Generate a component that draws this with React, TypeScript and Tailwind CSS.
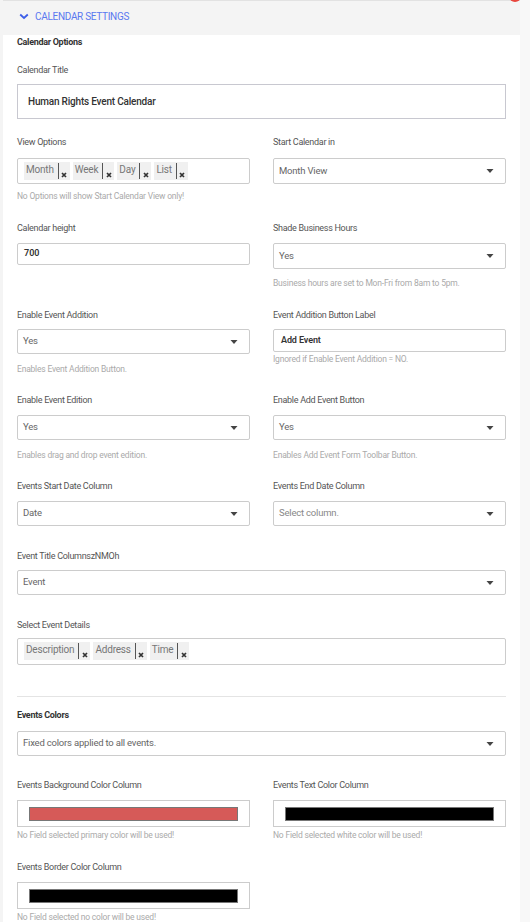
import React from "react";

const font = { fontFamily: '"Roboto", "Liberation Sans", sans-serif' };

function Label({ children, bold = false }: { children: React.ReactNode; bold?: boolean }) {
  return (
    <div
      className={`h-[12px] leading-[13px] text-[9px] ${
        bold ? "font-bold text-[#333] tracking-[-0.3px]" : "text-[#555] tracking-[-0.3px]"
      }`}
    >
      {children}
    </div>
  );
}

function Help({ children, mt }: { children: React.ReactNode; mt: string }) {
  return (
    <div className={`${mt} h-[12px] leading-[13px] text-[8.5px] tracking-[-0.2px] text-[#aaa]`}>{children}</div>
  );
}

function Caret() {
  return (
    <svg width="8" height="4" viewBox="0 0 8 4" className="shrink-0">
      <path d="M0.5 0 L7.5 0 L4 4 Z" fill="#444" />
    </svg>
  );
}

function Select({
  value,
  mt,
  h = "h-[26px]",
  placeholder = false,
}: {
  value: string;
  mt: string;
  h?: string;
  placeholder?: boolean;
}) {
  return (
    <div
      className={`${mt} ${h} border border-[#ccc] rounded-[2px] bg-white flex items-center justify-between pl-[5px] pr-[11px]`}
    >
      <span className={`text-[9.5px] tracking-[-0.2px] ${placeholder ? "text-[#888]" : "text-[#666]"}`}>{value}</span>
      <Caret />
    </div>
  );
}

function Tag({ text }: { text: string }) {
  return (
    <div className="flex h-[18px] bg-[#f0f0f0] mr-[3px]">
      <span className="pl-[2px] pr-[4px] leading-[16px] text-[10px] tracking-[-0.2px] text-[#777]">{text}</span>
      <span className="w-px bg-[#555] my-[1px]" />
      <span className="w-[11px] flex items-end justify-center pb-[2px]">
        <svg width="6" height="6" viewBox="0 0 6 6">
          <path d="M1 1 L5 5 M5 1 L1 5" stroke="#333" strokeWidth="1.7" />
        </svg>
      </span>
    </div>
  );
}

function Tags({ items, mt, h }: { items: string[]; mt: string; h: string }) {
  return (
    <div className={`${mt} ${h} border border-[#ccc] rounded-[2px] bg-white flex items-start pt-[3px] pl-[6px]`}>
      {items.map((t) => (
        <Tag key={t} text={t} />
      ))}
    </div>
  );
}

function ColorBox({ color, mt }: { color: string; mt: string }) {
  return (
    <div className={`${mt} h-[27px] border border-[#ccc] bg-white flex items-center px-[11px]`}>
      <div className="h-[14px] w-full border border-[#777]" style={{ backgroundColor: color }} />
    </div>
  );
}

export default function App() {
  return (
    <div className="w-[530px] h-[922px] bg-[#f8f8f8] flex overflow-hidden relative" style={font}>
      <span className="absolute top-[-10px] left-[509px] w-[12px] h-[12px] rounded-full bg-[#e8453c]" />
      <div className="w-[3px] bg-[#f4f4f4] shrink-0" />
      <div className="w-[517px] bg-white flex flex-col">
        <div className="h-[35px] border-t border-[#e2e2e2] bg-[#f4f4f4] flex items-center pl-[16px] pb-[12px] pt-[8px]">
          <svg width="10" height="7" viewBox="0 0 10 7" className="mr-[6px]">
            <path d="M1.2 1.5 L5 5 L8.8 1.5" stroke="#3d5ee8" strokeWidth="1.8" fill="none" />
          </svg>
          <span className="text-[10px] text-[#5a78f0] tracking-[-0.3px]">CALENDAR SETTINGS</span>
        </div>

        <div className="px-[14px]">
          <div className="mt-[1px]">
            <Label bold>Calendar Options</Label>
          </div>

          <div className="mt-[16px]">
            <Label>Calendar Title</Label>
            <div className="mt-[8px] h-[35px] border border-[#c8c8d0] bg-white flex items-center pl-[10px]">
              <span className="text-[10px] text-[#333] font-medium tracking-[-0.2px]">Human Rights Event Calendar</span>
            </div>
          </div>

          <div className="mt-[17px] grid grid-cols-2 gap-x-[23px]">
            <div>
              <Label>View Options</Label>
              <Tags items={["Month", "Week", "Day", "List"]} mt="mt-[10px]" h="h-[26px]" />
              <Help mt="mt-[6px]">No Options will show Start Calendar View only!</Help>
            </div>
            <div>
              <Label>Start Calendar in</Label>
              <Select value="Month View" mt="mt-[10px]" />
            </div>
          </div>

          <div className="mt-[20px] grid grid-cols-2 gap-x-[23px]">
            <div>
              <Label>Calendar height</Label>
              <div className="mt-[9px] h-[22px] border border-[#ccc] rounded-[2px] flex items-center pl-[6px]">
                <span className="text-[9px] font-semibold text-[#333]">700</span>
              </div>
            </div>
            <div>
              <Label>Shade Business Hours</Label>
              <Select value="Yes" mt="mt-[9px]" />
              <Help mt="mt-[8px]">Business hours are set to Mon-Fri from 8am to 5pm.</Help>
            </div>
          </div>

          <div className="mt-[20px] grid grid-cols-2 gap-x-[23px]">
            <div>
              <Label>Enable Event Addition</Label>
              <Select value="Yes" mt="mt-[8px]" h="h-[25px]" />
              <Help mt="mt-[9px]">Enables Event Addition Button.</Help>
            </div>
            <div>
              <Label>Event Addition Button Label</Label>
              <div className="mt-[8px] h-[23px] border border-[#ccc] rounded-[2px] flex items-center pl-[7px]">
                <span className="text-[9px] font-semibold text-[#333] tracking-[-0.1px]">Add Event</span>
              </div>
              <Help mt="mt-[1px]">Ignored if Enable Event Addition = NO.</Help>
            </div>
          </div>

          <div className="mt-[19px] grid grid-cols-2 gap-x-[23px]">
            <div>
              <Label>Enable Event Edition</Label>
              <Select value="Yes" mt="mt-[9px]" h="h-[25px]" />
              <Help mt="mt-[9px]">Enables drag and drop event edition.</Help>
            </div>
            <div>
              <Label>Enable Add Event Button</Label>
              <Select value="Yes" mt="mt-[9px]" h="h-[25px]" />
              <Help mt="mt-[9px]">Enables Add Event Form Toolbar Button.</Help>
            </div>
          </div>

          <div className="mt-[19px] grid grid-cols-2 gap-x-[23px]">
            <div>
              <Label>Events Start Date Column</Label>
              <Select value="Date" mt="mt-[9px]" h="h-[25px]" />
            </div>
            <div>
              <Label>Events End Date Column</Label>
              <Select value="Select column." mt="mt-[9px]" h="h-[25px]" placeholder />
            </div>
          </div>

          <div className="mt-[24px]">
            <Label>Event Title ColumnszNMOh</Label>
            <Select value="Event" mt="mt-[8px]" h="h-[25px]" />
          </div>

          <div className="mt-[24px]">
            <Label>Select Event Details</Label>
            <Tags items={["Description", "Address", "Time"]} mt="mt-[7px]" h="h-[27px]" />
          </div>

          <div className="mt-[31px] h-px bg-[#e4e4e4]" />

          <div className="mt-[12px]">
            <Label bold>Events Colors</Label>
            <Select value="Fixed colors applied to all events." mt="mt-[10px]" h="h-[25px]" />
          </div>

          <div className="mt-[23px] grid grid-cols-2 gap-x-[23px]">
            <div>
              <Label>Events Background Color Column</Label>
              <ColorBox color="#d65a58" mt="mt-[9px]" />
              <Help mt="mt-[2px]">No Field selected primary color will be used!</Help>
            </div>
            <div>
              <Label>Events Text Color Column</Label>
              <ColorBox color="#000000" mt="mt-[9px]" />
              <Help mt="mt-[2px]">No Field selected white color will be used!</Help>
            </div>
          </div>

          <div className="mt-[20px] grid grid-cols-2 gap-x-[23px]">
            <div>
              <Label>Events Border Color Column</Label>
              <ColorBox color="#000000" mt="mt-[9px]" />
              <Help mt="mt-[2px]">No Field selected no color will be used!</Help>
            </div>
          </div>
        </div>
      </div>
    </div>
  );
}
